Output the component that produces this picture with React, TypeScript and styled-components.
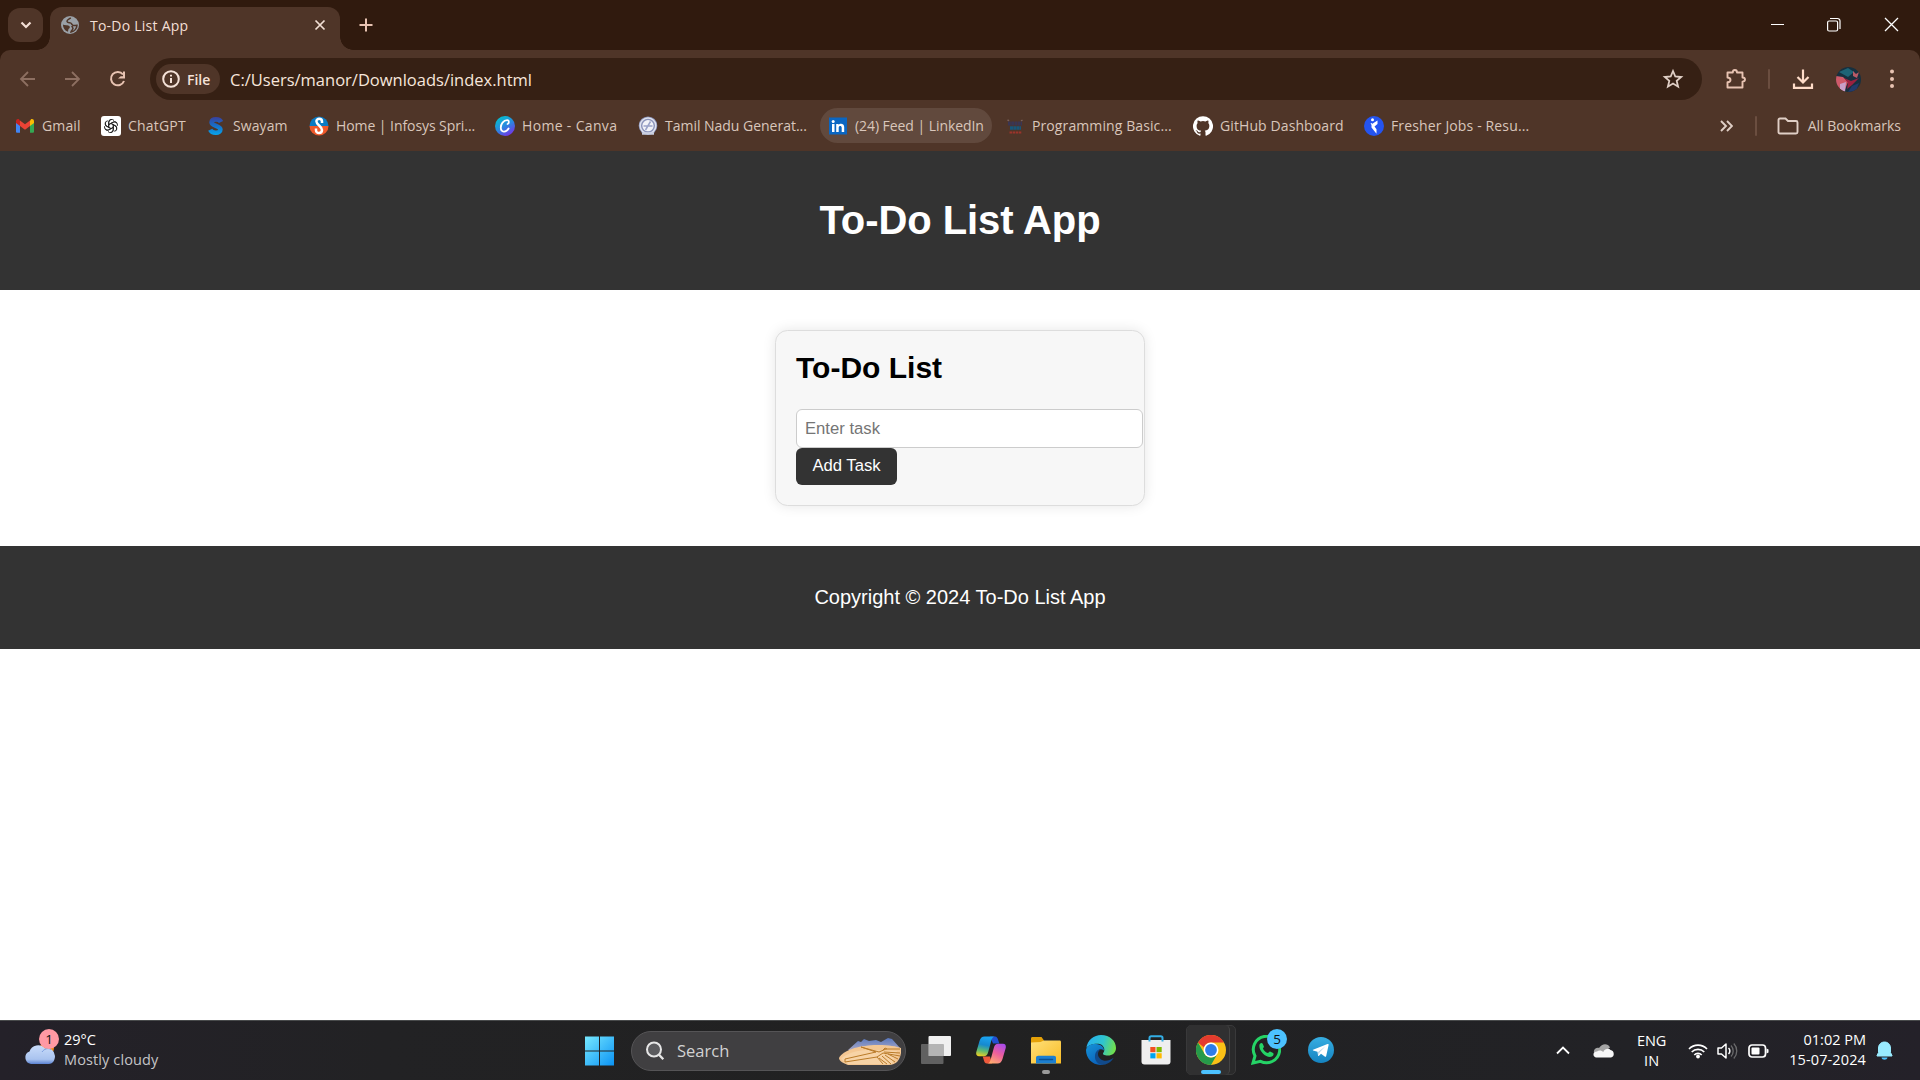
import React from "react";
import styled, { createGlobalStyle } from "styled-components";

const Global = createGlobalStyle`
  *, *::before, *::after { box-sizing: border-box; }
  body { margin: 0; background: #fff; overflow: hidden; }
  svg { display: block; flex: none; }
`;

const ui = `"Open Sans", "Noto Sans", sans-serif`;
const arial = `"Liberation Sans", Arial, sans-serif`;

const Screen = styled.div`
  width: 1920px; height: 1080px; display: flex; flex-direction: column;
  font-family: ${ui}; overflow: hidden;
`;
const Label = styled.span<{ $ls?: number }>`
  white-space: pre; letter-spacing: ${p => p.$ls ?? 0}px;
`;

/* ---------- tab strip ---------- */
const TabStrip = styled.div`
  height: 50px; background: #301a0e; display: flex; align-items: flex-end; flex: none;
`;
const TabSearch = styled.div`
  width: 35px; height: 34px; margin: 0 7px 8px 8px; border-radius: 12px; background: #4f3528;
  display: flex; align-items: center; justify-content: center;
`;
const Tab = styled.div`
  position: relative; width: 290px; height: 43px; border-radius: 12px 12px 0 0; background: #4f3528;
  display: flex; align-items: center; padding: 0 14px 7px 11px; color: #f3dfd5; font-size: 14px;
  &::before, &::after {
    content: ""; position: absolute; bottom: 0; width: 13px; height: 13px;
  }
  &::before { left: -13px; background: radial-gradient(circle at 0 0, transparent 12.5px, #4f3528 13px); }
  &::after { right: -13px; background: radial-gradient(circle at 100% 0, transparent 12.5px, #4f3528 13px); }
`;
const TabTitle = styled.div`flex: 1; padding-left: 11px;`;
const NewTab = styled.div`margin: 0 0 18px 18.5px;`;
const WindowControls = styled.div`
  margin-left: auto; display: flex; gap: 42px; padding-right: 21px; align-self: flex-start; padding-top: 17px;
`;

/* ---------- toolbar ---------- */
const ToolbarBack = styled.div`background: #301a0e; flex: none;`;
const Toolbar = styled.div`
  height: 50px; background: #4f3528; border-radius: 10px 10px 0 0; display: flex; align-items: center; padding: 8px 20px 0 17px;
`;
const NavIcons = styled.div`display: flex; gap: 23px; width: 133px;`;
const Omnibox = styled.div`
  width: 1552px; height: 42px; border-radius: 21px; background: #362014; display: flex; align-items: center; padding: 0 18px 0 6px;
`;
const Chip = styled.div`
  width: 64px; height: 30px; border-radius: 15px; background: #4f3528; display: flex; align-items: center;
  gap: 7px; padding-left: 6px; color: #f5e2d8; font-size: 14px; font-weight: 600;
`;
const Url = styled.div`flex: 1; padding-left: 10px; color: #f7e6dc; font-size: 16.5px;`;
const Tools = styled.div`
  flex: 1; display: flex; align-items: center; padding-left: 23px;
  & > :nth-child(1) { margin-right: 21px; }
  & > :nth-child(2) { margin-right: 22px; }
  & > :nth-child(3) { margin-right: 22px; }
  & > :nth-child(4) { margin-right: 26px; }
`;
const Divider = styled.i`width: 2px; height: 20px; background: #6b4e40; border-radius: 1px;`;

/* ---------- bookmarks ---------- */
const Bookmarks = styled.div`
  height: 51px; background: #4f3528; display: flex; align-items: center; padding-left: 7px; flex: none;
  color: #d9c6bb; font-size: 14px;
`;
const Bookmark = styled.div<{ $w: number; $active?: boolean; $gap?: number }>`
  width: ${p => p.$w}px; height: 35px; border-radius: 17.5px; flex: none; display: flex; align-items: center; gap: 7px;
  padding-left: 8px; margin-right: ${p => p.$gap ?? 0}px;
  background: ${p => (p.$active ? "#61493d" : "transparent")};
`;
const BookmarkEnd = styled.div`
  margin-left: auto; display: flex; align-items: center; padding-right: 19px;
  & > :nth-child(2) { margin: 0 20px 0 22px; }
  & > :nth-child(3) { margin-right: 9px; }
`;

/* ---------- page ---------- */
const Page = styled.main`flex: 1; background: #fff; font-family: ${arial};`;
const Header = styled.header`
  height: 139px; background: #333; color: #fff; display: flex; align-items: center; justify-content: center;
`;
const Title = styled.h1`margin: 0; padding-bottom: 2px; font-size: 40px; line-height: 46px; letter-spacing: -.08px;`;
const Card = styled.section`
  width: 370px; height: 176px; margin: 40px auto; padding: 20px; background: #f7f7f7;
  border: 1px solid #ddd; border-radius: 12.5px; box-shadow: 0 0 12.5px rgba(0,0,0,.1);
`;
const CardTitle = styled.h2`margin: 0 0 24px; font-size: 30px; line-height: 34px;`;
const TaskInput = styled.input`
  display: block; width: 347px; height: 39px; padding: 0 8px; border: 1px solid #ccc; border-radius: 6px;
  font: 16.67px ${arial}; background: #fff; outline: 0;
  &::placeholder { color: #757575; }
`;
const AddButton = styled.button`
  display: block; width: 101px; height: 37px; padding: 0 0 2px; border: 0; border-radius: 6px; background: #333; color: #fff;
  font: 16.67px ${arial};
`;
const Footer = styled.footer`
  height: 103px; background: #333; color: #fff; display: flex; align-items: center; justify-content: center; font-size: 20px;
`;

/* ---------- taskbar ---------- */
const Taskbar = styled.div`
  height: 60px; flex: none; display: flex; align-items: center; border-top: 1px solid #484a4b;
  background: linear-gradient(90deg, #242129, #222224 20%, #212121 50%, #222226 85%, #242129);
  color: #fff; font-size: 14.5px; line-height: 20px;
`;
const Weather = styled.div`width: 584px; display: flex; align-items: center; padding-left: 24px; gap: 5px;`;
const Lines = styled.div<{ $align?: string; $lift?: number }>`
  display: flex; flex-direction: column; align-items: ${p => p.$align ?? "flex-start"}; padding-bottom: ${p => p.$lift ?? 2}px;
`;
const Muted = styled.div`color: #c5c5c7;`;
const SearchBox = styled.div`
  width: 275px; height: 40px; margin: 0 2px 0 17px; border-radius: 20px; background: #403f41; border: 1px solid #555456;
  display: flex; align-items: center; padding: 0 3px 0 13px; color: #d2d2d2; font-size: 16.5px; overflow: hidden; gap: 12px;
  & > :last-child { margin-left: auto; }
`;
const Apps = styled.div`display: flex; align-items: center; padding-bottom: 1px;`;
const AppSlot = styled.div`
  position: relative; width: 55px; height: 58px; display: flex; align-items: center; justify-content: center;
`;
const ActiveTile = styled.div`
  position: absolute; left: 3px; top: 4px; width: 50px; height: 50px; border-radius: 5px; background: #2a2a2b; border: 1px solid #39393a;
  &::before { content: ""; position: absolute; left: 0; top: -1px; width: 43px; height: 50px; border-radius: 5px; background: #303031; border-right: 1px solid #444; }
`;
const Over = styled.div`position: relative;`;
const Running = styled.i<{ $w: number; $c: string }>`
  position: absolute; bottom: 5px; left: calc(50% - ${p => p.$w / 2}px); width: ${p => p.$w}px; height: 4px; border-radius: 2px; background: ${p => p.$c};
`;
const Badge = styled.div<{ $x: number; $y: number; $c: string }>`
  position: absolute; left: ${p => p.$x}px; top: ${p => p.$y}px; width: 20px; height: 20px; border-radius: 50%;
  background: ${p => p.$c}; color: #111; font-size: 13.5px; line-height: 20px; text-align: center;
`;
const WeatherIcon = styled.div`position: relative; width: 35px; height: 40px; margin-bottom: 6px;`;
const Tray = styled.div`
  margin-left: auto; display: flex; align-items: center; padding-right: 27px;
  & > :nth-child(1) { margin-right: 23px; }
  & > :nth-child(2) { margin-right: 23px; }
  & > :nth-child(3) { margin-right: 22px; }
  & > :nth-child(4) { margin-right: 9px; }
  & > :nth-child(5) { margin-right: 10px; }
  & > :nth-child(6) { margin-right: 20px; }
  & > :nth-child(7) { margin-right: 10px; }
`;

const S = (p: React.SVGProps<SVGSVGElement>) => <svg fill="none" {...p} />;

const Gmail = () => (
  <S width="20" height="20" viewBox="0 0 20 20"><path d="M1 5v10.500c0 .8.5 1.300 1.300 1.300H5V8z" fill="#4285f4" /><path d="M19 5v10.500c0 .8-.5 1.300-1.300 1.300H15V8z" fill="#34a853" /><path d="M15 5v5l4-3V5.200c0-2-2-2.600-3.200-1.700z" fill="#fbbc04" /><path d="M5 10V4.500l5 3.700 5-3.700V10l-5 3.800z" fill="#ea4335" /><path d="M1 5.200V7l4 3V5l-.8-1.500C3 2.600 1 3.200 1 5.200z" fill="#c5221f" /></S>
);
const gptPetals = [0, 60, 120, 180, 240, 300];
const ChatGpt = () => (
  <S width="20" height="20" viewBox="0 0 20 20"><rect width="20" height="20" rx="3" fill="#fff" />
    <g stroke="#222" strokeWidth="1">{gptPetals.map(a => <path key={a} transform={`rotate(${a} 10 10)`} d="M7.700 11.300V6.200a3 3 0 0 1 5.300-1.700M7.700 8.700l4.400-2.500a3 3 0 0 1 3.600.6" />)}</g></S>
);
const Swayam = () => (
  <S width="20" height="20" viewBox="0 0 20 20"><defs><linearGradient id="sw" gradientUnits="userSpaceOnUse" x1="0" y1="1" x2="0" y2="19"><stop stopColor="#3a3f9c" /><stop offset=".5" stopColor="#1670c8" /><stop offset="1" stopColor="#08a4ea" /></linearGradient></defs>
    <path d="M15 6C13.500 2.500 6 2.500 5.600 6.200c0 4 8.800 3.200 8.800 7.200 0 4.400-8.300 4.400-10.200.4" stroke="url(#sw)" strokeWidth="4.600" /></S>
);
const Infosys = () => (
  <S width="20" height="20" viewBox="0 0 20 20"><path d="M.5 10a9.500 9.500 0 0 1 19 0z" fill="#0a7bc4" /><path d="M.5 10a9.500 9.500 0 0 0 19 0z" fill="#f0592b" /><path d="M13 7V5.500c0-3.500-5.600-3.500-5.600-.3C7.400 9 13 10 13 14c0 4-6 4-6 .2v-1.700" stroke="#fff" strokeWidth="2.500" /></S>
);
const Canva = () => (
  <S width="20" height="20" viewBox="0 0 20 20"><defs><linearGradient id="cv" x1=".2" y1="0" x2=".8" y2="1"><stop stopColor="#00c4cc" /><stop offset=".5" stopColor="#2a88e0" /><stop offset="1" stopColor="#7d2ae8" /></linearGradient></defs><circle cx="10" cy="10" r="10" fill="url(#cv)" />
    <path d="M12.500 8c1.700-.5 2-3.800-.3-3.800C8.300 4.200 5.800 8.300 5.800 11.500c0 5.400 5.500 5 7.800 1" stroke="#fff" strokeWidth="1.800" strokeLinecap="round" /></S>
);
const TamilNadu = () => (
  <S width="20" height="20" viewBox="0 0 20 20"><circle cx="10" cy="9.700" r="9.300" fill="#8a93ba" /><circle cx="10" cy="9.700" r="7.800" stroke="#dfe2ee" strokeWidth="1.500" /><circle cx="10" cy="9.700" r="5.600" fill="#f2f3f8" /><path d="M5.500 10h9M7.500 14l5-8.500" stroke="#9aa3c8" strokeWidth="1.500" /><path d="M4 17.500h12" stroke="#c9cee0" strokeWidth="2.500" /></S>
);
const LinkedIn = () => (
  <S width="20" height="20" viewBox="0 0 20 20"><rect x="1" y="1.500" width="18" height="17" fill="#0a66c2" /><circle cx="5.200" cy="5.400" r="1.500" fill="#fff" /><path d="M4 8h2.500v8H4zM8.200 8h2.400v1.100c1-1.900 5.600-1.900 5.600 2V16h-2.500v-4.300c0-2.200-3-2.100-3 0V16H8.200z" fill="#fff" /></S>
);
const Programming = () => (
  <S width="20" height="20" viewBox="0 0 20 20"><path d="M2.500 3.800l1.500 1M17.500 4l-1.500 1" stroke="#7a6059" strokeWidth="1.500" /><path d="M3 7.500h14" stroke="#3a3552" strokeWidth="4" strokeDasharray="2.800 .4" /><path d="M5 12h11" stroke="#17567a" strokeWidth="3.500" strokeDasharray="3 .3" /><path d="M4.500 16.500h12" stroke="#9b342b" strokeWidth="2.200" strokeDasharray="2.500 .6" /></S>
);
const GitHub = () => (
  <S width="20" height="20" viewBox="0 0 24 24"><path fill="#fff" d="M12 .3a12 12 0 0 0-3.800 23.400c.6.1.8-.3.8-.6v-2c-3.300.7-4-1.600-4-1.600-.6-1.400-1.400-1.800-1.400-1.800-1-.7.1-.7.1-.7 1.200 0 1.900 1.200 1.900 1.200 1 1.800 2.800 1.300 3.500 1 0-.8.4-1.300.7-1.600-2.700-.3-5.500-1.300-5.500-6 0-1.200.5-2.300 1.300-3.100-.2-.4-.6-1.600 0-3.200 0 0 1-.3 3.400 1.200a11.500 11.500 0 0 1 6 0c2.300-1.500 3.300-1.200 3.300-1.200.6 1.600.2 2.800 0 3.200.9.8 1.300 1.900 1.300 3.200 0 4.600-2.800 5.600-5.500 5.900.5.4.9 1 .9 2.200v3.300c0 .3.1.7.8.6A12 12 0 0 0 12 .3" /></S>
);
const Fresher = () => (
  <S width="20" height="20" viewBox="0 0 20 20"><circle cx="10" cy="10" r="10" fill="#2454f0" /><circle cx="8.500" cy="3.700" r="1.500" fill="#fff" /><path d="M13.500 4.500L7.500 8.300v3.200l5 6.200v-4.500l-2-2.700 3-2.500z" fill="#fff" /><path d="M7 7l1.500 2.500" stroke="#fff" /></S>
);

const bookmarks: { t: string; w: number; I: React.FC; ls: number; on?: boolean; gap?: number }[] = [
  { t: "Gmail", w: 86, I: Gmail, ls: 0.15 },
  { t: "ChatGPT", w: 105, I: ChatGpt, ls: 0.2 },
  { t: "Swayam", w: 103, I: Swayam, ls: 0.1 },
  { t: "Home | Infosys Spri...", w: 186, I: Infosys, ls: -0.07 },
  { t: "Home - Canva", w: 143, I: Canva, ls: 0.33 },
  { t: "Tamil Nadu Generat...", w: 190, I: TamilNadu, ls: -0.02 },
  { t: "(24) Feed | LinkedIn", w: 172, I: LinkedIn, ls: -0.06, on: true, gap: 5 },
  { t: "Programming Basic...", w: 188, I: Programming, ls: 0.1 },
  { t: "GitHub Dashboard", w: 171, I: GitHub, ls: 0.1 },
  { t: "Fresher Jobs - Resu...", w: 180, I: Fresher, ls: 0.14 },
];

const Globe = () => (
  <S width="18" height="18" viewBox="0 0 18 18"><circle cx="9" cy="9" r="9" fill="#9aa0a6" /><path d="M2 8.500c1.500.8 2.500.5 4 .8 1.800.3 3 .7 2.800 2.200-.2 1.200-1.300 1-1.500 2.200l-.3 2C4 14.800 1.900 12 2 8.500z" fill="#4f3528" /><path d="M9.800 1.800C7.500 3.500 5.800 3.700 6 5.300c.2 1.500 2 1.200 3.300 1.600 1.600.5 1.500 2.300 3 2.600 1.400.3 2.200-.3 3.700-.3-.1 3.200-2.500 6.300-6 6.800.3-1.600 2-2 1.900-3.600 0-1-1-1.500-1-2.500" stroke="#4f3528" strokeWidth="1.500" /></S>
);
const Cloud = () => (
  <S width="35" height="40" viewBox="0 0 35 40"><defs><linearGradient id="cl" x1="0" y1="0" x2="0" y2="1"><stop stopColor="#c9dcfa" /><stop offset=".75" stopColor="#a9c3ef" /><stop offset="1" stopColor="#5b82d2" /></linearGradient></defs>
    <circle cx="23" cy="20" r="7" fill="#f08a18" /><path d="M7 36a6.500 6.500 0 0 1-1.500-12.500A9 9 0 0 1 21 20.500a8 8 0 0 1 10 7.500c0 5-3 8-6 8z" fill="url(#cl)" /><path d="M18 24c2-3 6-4.500 9-2.500" stroke="#7d9fe0" /></S>
);
const Windows = () => (
  <S width="30" height="30" viewBox="0 0 30 30"><defs><linearGradient id="wi" gradientUnits="userSpaceOnUse" x1="0" y1="0" x2="30" y2="30"><stop stopColor="#79eaff" /><stop offset="1" stopColor="#0a92f4" /></linearGradient></defs><path d="M1 .500h14v14H1zM16 .500h14v14H16zM1 15.500h14v14H1zM16 15.500h14v14H16z" fill="url(#wi)" /></S>
);
const SandHill = () => (
  <S width="64" height="30" viewBox="0 0 64 30"><defs><linearGradient id="sk" x1="0" y1="0" x2="0" y2="1"><stop stopColor="#5877be" /><stop offset="1" stopColor="#c2b7c6" /></linearGradient></defs>
    <path d="M10 14L20 5l3 1 3-3 5 2 7-1 5 2 7-4 4 1 8 9v6z" fill="url(#sk)" /><path d="M1 22C5 14 20 10 36 9c12-.5 22 1 27 3v5c-1 7-5 12-12 12H10C5 27 1 25 1 22z" fill="#f4c793" /><path d="M3 23c5-6 20-10 34-9l22 1-5 13H10z" fill="#f8d9ae" opacity=".7" />
    <g stroke="#b97a28" strokeWidth="1"><path d="M7 23l31-7-15-5 18 5 7-3 14 0M7 26l32-5 6-4 17 3M7 23v3M44 15l3-3 2 1M41 22l8 6M44 20l9 8M47 19l10 7M50 18l10 5M39 21l6 7M46 16l16 1" /></g></S>
);
const TaskView = () => (
  <S width="30" height="28" viewBox="0 0 30 28"><rect x="7.500" width="22.500" height="20" rx="1" fill="#f0f0f0" /><rect y="8" width="22.500" height="20" rx="1" fill="#6c6c6c" opacity=".85" /><path d="M7.500 8h15v12h-15z" fill="#b4b4b4" /></S>
);
const Copilot = () => (
  <S width="30" height="28" viewBox="0 0 30 28"><defs><linearGradient id="c1" x1=".4" y1="0" x2=".2" y2="1"><stop stopColor="#1aa3f0" /><stop offset=".4" stopColor="#1689cf" /><stop offset=".7" stopColor="#5dba73" /><stop offset="1" stopColor="#f3d01e" /></linearGradient><linearGradient id="c2" x1=".8" y1="0" x2=".3" y2="1"><stop stopColor="#a94bed" /><stop offset=".5" stopColor="#ee5f9b" /><stop offset="1" stopColor="#ffab70" /></linearGradient></defs>
    <path d="M14 .500h5c2 0 2.700 1.500 3.500 4.500l.8 2.500H17z" fill="#2150d3" />
    <path d="M16 27.500h-5c-2 0-2.700-1.500-3.500-4.500l-.8-2.500H14z" fill="#ee5a3c" />
    <path d="M8.500.500H19c-2 0-3 1.500-3.800 4.500l-3 11c-.8 3-2 4.300-4.500 4.300H3c-2.500 0-3.200-2-2.700-4.300L3.500 5C4.500 1.800 6 .500 8.500.500z" fill="url(#c1)" />
    <path d="M21.500 27.500H11c2 0 3-1.500 3.800-4.500l3-11c.8-3 2-4.300 4.500-4.300H27c2.500 0 3.200 2 2.700 4.300L26.500 23c-1 3.200-2.500 4.500-5 4.500z" fill="url(#c2)" /></S>
);
const Explorer = () => (
  <S width="30" height="28" viewBox="0 0 30 28"><defs><linearGradient id="fo" x1="0" y1="0" x2="1" y2="1"><stop stopColor="#ffe07a" /><stop offset="1" stopColor="#f9bc25" /></linearGradient></defs><path d="M0 7V2.500C0 1.500.7 1 1.500 1h9L13 4.500V9H0z" fill="#e5a108" /><path d="M0 6.500L9.500 6 13 4.500h15.500c1 0 1.500.6 1.500 1.500V27.500H0z" fill="url(#fo)" /><path d="M5 27.500V22c0-1.500.8-2.300 2.300-2.300h15.400c1.500 0 2.300.8 2.300 2.300v5.500z" fill="#1c7fd0" /><path d="M8.500 23.500h13" stroke="#0b5194" strokeWidth="1.500" strokeLinecap="round" /></S>
);
const Edge = () => (
  <S width="30" height="30" viewBox="0 0 30 30"><defs><linearGradient id="e1" x1="0" y1=".3" x2="1" y2=".5"><stop stopColor="#26aff0" /><stop offset=".55" stopColor="#2fc4cf" /><stop offset="1" stopColor="#72e04b" /></linearGradient><linearGradient id="e2" x1="0" y1="0" x2=".6" y2="1"><stop stopColor="#1593d8" /><stop offset="1" stopColor="#0b62bb" /></linearGradient></defs>
    <path d="M.3 13C1.500 5 8 0 15 0c9 0 15 6 15 13 0 5-4 7.500-8 7.500-4 0-6-1.200-4.500-3C19.500 14.800 18 9.500 12.500 8.700 7 8.300 1.500 10.500.3 13z" fill="url(#e1)" /><path d="M0 15c.5-4 5-6.500 10-6 5 .4 8 3 8 6.500-4-3-7.800 0-7.600 5 .2 4 2.500 7.500 6.300 9.500C7 30.500 0 24 0 15z" fill="url(#e2)" /><path d="M15.500 14.200c-2.200.5-3.500 2.300-3.500 4.800 0 5 6 8.500 11.500 6 1.500-.6 2.800-1.500 4.200-2.200-2.500 4.500-7 7.200-12 7.200-4.500-1-7.200-5-6.700-9.500.4-4 3-6.800 6.500-6.300z" fill="#114a8b" /></S>
);
const Store = () => (
  <S width="30" height="30" viewBox="0 0 30 30"><path d="M.5 5h29v21.500c0 2-1 3-3 3h-23c-2 0-3-1-3-3z" fill="#efefef" /><path d="M8.500 6.500V3c0-1.200.5-1.700 1.700-1.700h9.600c1.200 0 1.700.5 1.700 1.700v3.500" stroke="#33aee5" strokeWidth="2" /><path d="M9.300 12h5.200v5.200H9.300z" fill="#f25022" /><path d="M15.500 12h5.200v5.200h-5.200z" fill="#7fba00" /><path d="M9.300 18.200h5.200v5.200H9.300z" fill="#00a4ef" /><path d="M15.500 18.200h5.200v5.200h-5.200z" fill="#ffb900" /></S>
);
const Chrome = () => (
  <S width="30" height="30" viewBox="0 0 30 30"><circle cx="15" cy="15" r="15" fill="#fbc116" /><path d="M2 7.500A15 15 0 0 1 28 7.500H15a7.500 7.500 0 0 0-7 5z" fill="#e33b2e" /><path d="M2 7.500A15 15 0 0 0 15 30l6.500-11.300A7.500 7.500 0 0 1 8.500 18.700z" fill="#269a4a" /><circle cx="15" cy="15" r="7.500" fill="#fff" /><circle cx="15" cy="15" r="5.900" fill="#2f7de9" /></S>
);
const WhatsApp = () => (
  <S width="30" height="30" viewBox="0 0 30 30"><path d="M2 28l2-7A13.200 13.200 0 1 1 9.500 26.300z" stroke="#25d366" strokeWidth="3" /><path d="M8.500 9.500c1-2 2.500-2 3.200-.7l1.200 2.600c.3.700-1 1.700-1 2.100 1.200 2.500 3 3.900 5 4.600.6.200 1.300-1.800 2.200-1.500l3 1.500c1 .6.3 2.700-1.200 3.500C16 24 7 16 8.500 9.500z" fill="#25d366" /></S>
);
const Telegram = () => (
  <S width="26" height="26" viewBox="0 0 26 26"><defs><linearGradient id="tg" x1="0" y1="0" x2="0" y2="1"><stop stopColor="#37aee2" /><stop offset="1" stopColor="#1583c0" /></linearGradient></defs><circle cx="13" cy="13" r="13" fill="url(#tg)" /><path d="M5 12.800L19.500 7c.8-.3 1.300.2 1.100 1l-2.400 11c-.2.900-.8 1-1.500.6L13 16.800l-2 2c-.7.600-1 .3-1-.5l-.5-3.500L5.100 13.500c-.5-.2-.5-.5-.1-.7z" fill="#fff" /><path d="M10 15l7.500-5.800-6 6.300-.8 3z" fill="#b7d5e8" /></S>
);

const cream = "#e8c3b2";

export default function App() {
  return (
    <Screen>
      <Global />
      <TabStrip>
        <TabSearch><S width="12" height="8" viewBox="0 0 12 8"><path d="M1.500 1.500L6 6l4.500-4.500" stroke="#f3dfd5" strokeWidth="2.200" /></S></TabSearch>
        <Tab>
          <Globe /><TabTitle><Label $ls={0.24}>To-Do List App</Label></TabTitle>
          <S width="12" height="12" viewBox="0 0 12 12"><path d="M1.500 1.500l9 9M10.500 1.500l-9 9" stroke="#f3dfd5" strokeWidth="1.700" /></S>
        </Tab>
        <NewTab><S width="14" height="14" viewBox="0 0 14 14"><path d="M7 .5v13M.5 7h13" stroke={cream} strokeWidth="2" /></S></NewTab>
        <WindowControls>
          <S width="15" height="15" viewBox="0 0 15 15"><path d="M1 7.500h13" stroke="#fff" strokeWidth="1" /></S>
          <S width="15" height="15" viewBox="0 0 15 15"><rect x=".6" y="4" width="10" height="10" rx="1.500" stroke="#fff" strokeWidth="1.200" /><path d="M3 1.500h7.500a2.500 2.500 0 0 1 2.500 2.500V12" stroke="#fff" strokeWidth="1.200" /></S>
          <S width="15" height="15" viewBox="0 0 15 15"><path d="M1 1l13 13M14 1L1 14" stroke="#fff" strokeWidth="1.300" /></S>
        </WindowControls>
      </TabStrip>
      <ToolbarBack>
        <Toolbar>
          <NavIcons>
            <S width="22" height="22" viewBox="0 0 22 22"><path d="M18 11H4M11 4l-7 7 7 7" stroke="#8d6f61" strokeWidth="1.800" /></S>
            <S width="22" height="22" viewBox="0 0 22 22"><path d="M3 11h14M10 4l7 7-7 7" stroke="#8d6f61" strokeWidth="1.800" /></S>
            <S width="22" height="22" viewBox="0 0 22 22"><path d="M16 6.500A6.700 6.700 0 1 0 17 13" stroke={cream} strokeWidth="2" /><path d="M18 3.500v7h-7l2.700-2.200h2.300V3.500z" fill={cream} /></S>
          </NavIcons>
          <Omnibox>
            <Chip>
              <S width="18" height="18" viewBox="0 0 18 18"><circle cx="9" cy="9" r="7.800" stroke="#f5e2d8" strokeWidth="2" /><path d="M9 8v5M9 4.700v1.900" stroke="#f5e2d8" strokeWidth="2" /></S>
              <Label>File</Label>
            </Chip>
            <Url><Label>C:/Users/manor/Downloads/index.html</Label></Url>
            <S width="22" height="22" viewBox="0 0 22 22"><path d="M11 3l2.300 5.500 5.900.5-4.500 3.900 1.400 5.800L11 15.600l-5.100 3.100 1.400-5.800L2.800 9l5.900-.5z" stroke="#e0cfc6" strokeWidth="1.800" /></S>
          </Omnibox>
          <Tools>
            <S width="22" height="22" viewBox="0 0 22 22"><path d="M2.500 4.500h5.300c0-3.300 4.200-3.300 4.200 0h5.500v5c3.300 0 3.300 4.200 0 4.200v5.800h-15v-5.200c4-.5 4-4.300 0-4.800z" stroke={cream} strokeWidth="1.900" strokeLinejoin="round" /></S>
            <Divider />
            <S width="22" height="22" viewBox="0 0 22 22"><path d="M11 1.500v13M5.500 9l5.500 5.500L16.500 9M2 15.500v4.300h18v-4.300" stroke="#ffdcc8" strokeWidth="2.200" /></S>
            <S width="25" height="25" viewBox="0 0 25 25"><defs><clipPath id="av"><circle cx="12.500" cy="12.500" r="12.500" /></clipPath></defs><g clipPath="url(#av)"><path d="M0 0h25v25H0z" fill="#17303f" /><path d="M3 5l9-4 6 4-6 5z" fill="#1d6476" /><path d="M0 9l7 1 5 5-4 10-8-2z" fill="#cf5a69" /><path d="M4 17l6-2-1 10-5-2z" fill="#c9a0c9" /><path d="M8 11l7 3 8-3-7 7-5 4 1-6z" fill="#9a2140" /><path d="M17 4l3 3 3-2-2 6-4-2z" fill="#b85a66" /><path d="M16 19l7-3-3 8-8 1z" fill="#223a6b" /></g></S>
            <S width="10" height="20" viewBox="0 0 10 20"><path d="M5 2.500h.01M5 10h.01M5 17h.01" stroke={cream} strokeWidth="4" strokeLinecap="round" /></S>
          </Tools>
        </Toolbar>
      </ToolbarBack>
      <Bookmarks>
        {bookmarks.map(b => (
          <Bookmark key={b.t} $w={b.w} $active={b.on} $gap={b.gap}><b.I /><Label $ls={b.ls}>{b.t}</Label></Bookmark>
        ))}
        <BookmarkEnd>
          <S width="13" height="12" viewBox="0 0 13 12"><path d="M1 1l5 5-5 5M7 1l5 5-5 5" stroke="#e0cfc6" strokeWidth="1.900" /></S>
          <Divider />
          <S width="22" height="18" viewBox="0 0 22 18"><path d="M1.500 15V3c0-1 .5-1.500 1.500-1.500h5.500L11 4h8c1 0 1.500.5 1.500 1.500V15c0 1-.5 1.500-1.500 1.500H3c-1 0-1.500-.5-1.500-1.500z" stroke="#e0cfc6" strokeWidth="1.900" /></S>
          <Label>All Bookmarks</Label>
        </BookmarkEnd>
      </Bookmarks>

      <Page>
        <Header><Title>To-Do List App</Title></Header>
        <Card>
          <CardTitle>To-Do List</CardTitle>
          <TaskInput placeholder="Enter task" />
          <AddButton>Add Task</AddButton>
        </Card>
        <Footer>Copyright © 2024 To-Do List App</Footer>
      </Page>

      <Taskbar>
        <Weather>
          <WeatherIcon><Cloud /><Badge $x={15} $y={1} $c="#ff99a4">1</Badge></WeatherIcon>
          <Lines><Label>29°C</Label><Muted><Label $ls={0.12}>Mostly cloudy</Label></Muted></Lines>
        </Weather>
        <Windows />
        <SearchBox>
          <S width="20" height="20" viewBox="0 0 20 20"><circle cx="9" cy="8.500" r="7" stroke="#e6e6e6" strokeWidth="2" fill="#5c5c5f" /><path d="M13.800 13.500l4.500 4.800" stroke="#e6e6e6" strokeWidth="2.400" /></S>
          <Label>Search</Label>
          <SandHill />
        </SearchBox>
        <Apps>
          <AppSlot><TaskView /></AppSlot>
          <AppSlot><Copilot /></AppSlot>
          <AppSlot><Explorer /><Running $w={8} $c="#9a9a9a" /></AppSlot>
          <AppSlot><Edge /></AppSlot>
          <AppSlot><Store /></AppSlot>
          <AppSlot><ActiveTile /><Over><Chrome /></Over><Running $w={20} $c="#4cc2ff" /></AppSlot>
          <AppSlot><WhatsApp /><Badge $x={29} $y={8} $c="#4cc2ff">5</Badge></AppSlot>
          <AppSlot><Telegram /></AppSlot>
        </Apps>
        <Tray>
          <S width="14" height="9" viewBox="0 0 14 9"><path d="M1 7.500l6-6 6 6" stroke="#fff" strokeWidth="1.800" /></S>
          <S width="21" height="14" viewBox="0 0 21 14"><path d="M1 9C0 5 4 3 6 4c3-5 9-5 11-.5L10 8z" fill="#a5a5a5" /><path d="M3 13.500C-1 12 0 7.500 4 7.500c2-1.500 5-1 6 .5 2-3.500 6-4 7.500-2 4 .5 4.500 6.500.5 7.500z" fill="#f7f7f7" /></S>
          <Lines $align="center" $lift={0}><Label $ls={-0.15}>ENG</Label><Label>IN</Label></Lines>
          <S width="20" height="16" viewBox="0 0 20 16"><path d="M1 6a12.500 12.500 0 0 1 18 0M3.700 9a8.800 8.800 0 0 1 12.600 0M6.300 12a5 5 0 0 1 7.400 0" stroke="#fff" strokeWidth="1.600" /><circle cx="10" cy="13.500" r="1.900" fill="#fff" /></S>
          <S width="21" height="18" viewBox="0 0 21 18"><path d="M1 6h3.500L9 2v14l-4.500-4H1z" stroke="#fff" strokeWidth="1.500" strokeLinejoin="round" /><path d="M11.500 6a4 4 0 0 1 0 6" stroke="#fff" strokeWidth="1.500" /><path d="M14 3.500a8 8 0 0 1 0 11M16.800 1.500a11 11 0 0 1 0 15" stroke="#6a6a6c" strokeWidth="1.300" /></S>
          <S width="21" height="14" viewBox="0 0 21 14"><rect x="1" y="1" width="16.500" height="12" rx="3" stroke="#fff" strokeWidth="1.700" /><rect x="3.500" y="3.500" width="8" height="7" rx="1" fill="#fff" /><path d="M18.500 4.500l2 1v3l-2 1z" fill="#fff" /></S>
          <Lines $align="flex-end"><Label>01:02 PM</Label><Label $ls={0.12}>15-07-2024</Label></Lines>
          <S width="17" height="20" viewBox="0 0 17 20"><path d="M8.500 1C5 1 2.500 3.500 2.500 7v4.500L1 14.500V15h15v-.5l-1.500-3V7c0-3.500-2.500-6-6-6z" fill="#99ebff" stroke="#99ebff" strokeLinejoin="round" /><path d="M5.500 16.500h6c-.5 3-5.500 3-6 0z" fill="#4cc2ff" /></S>
        </Tray>
      </Taskbar>
    </Screen>
  );
}
